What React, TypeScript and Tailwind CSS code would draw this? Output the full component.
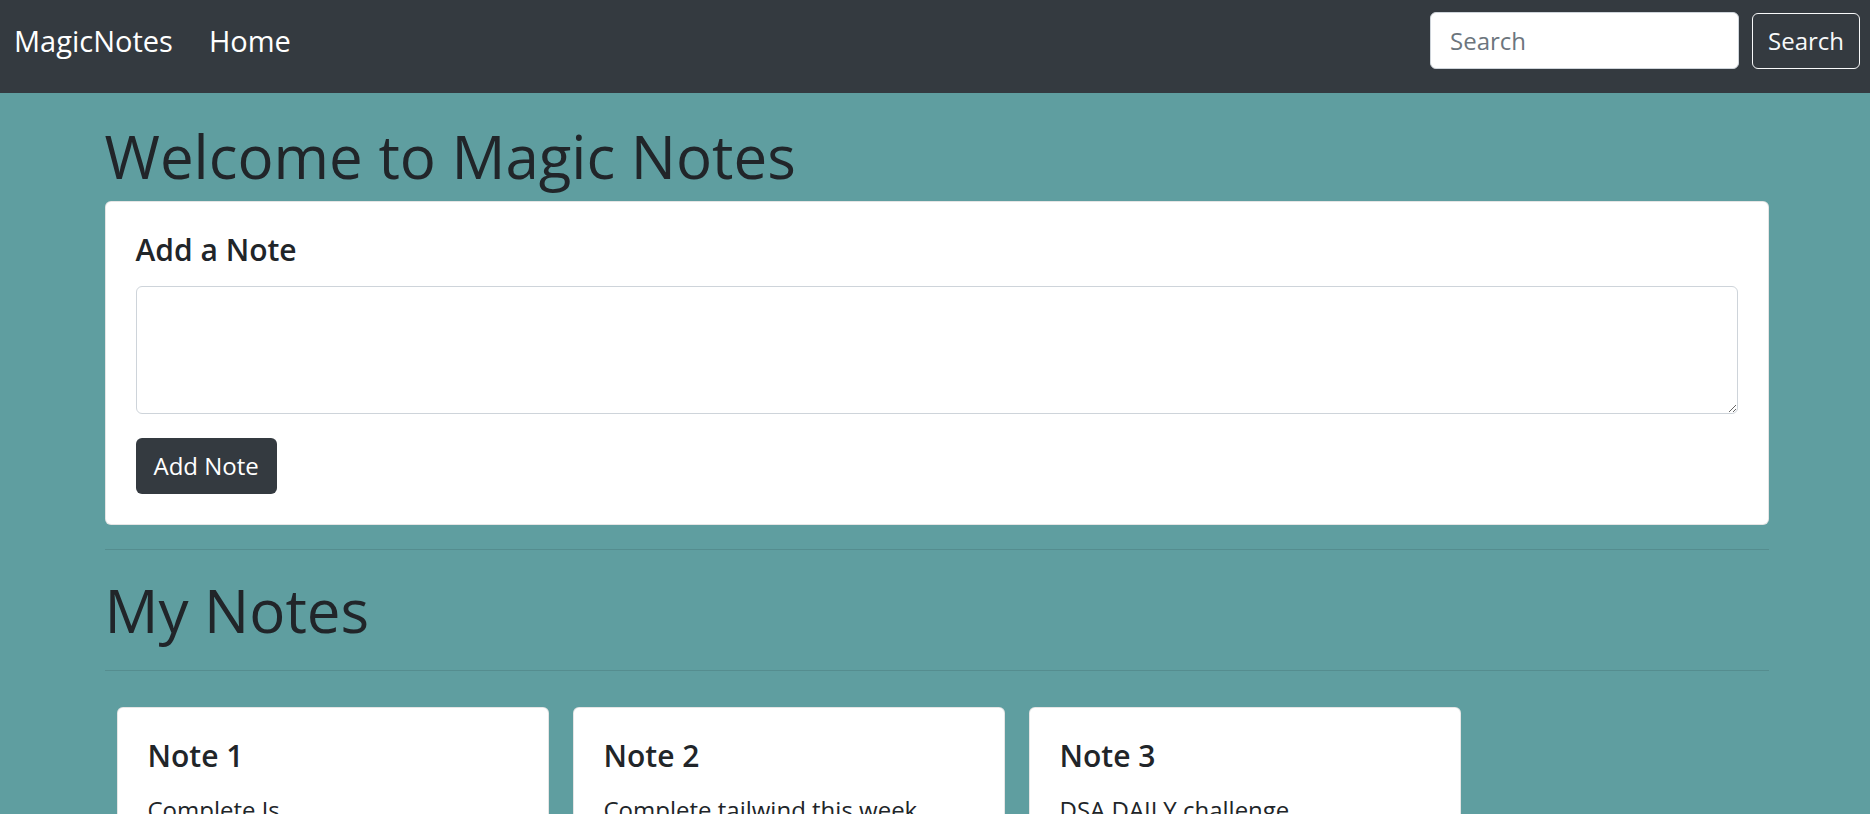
import { useState } from "react";

const notes = [
  { title: "Note 1", text: "Complete Js" },
  { title: "Note 2", text: "Complete tailwind this week" },
  { title: "Note 3", text: "DSA DAILY challenge" },
];

export default function App() {
  const [text, setText] = useState("");

  return (
    <div className="min-h-screen bg-[#5f9ea0] text-[#212529] font-['Open_Sans',sans-serif]">
      <nav className="bg-[#343a40] flex items-start justify-between pl-[14px] pr-[10px] pt-[12px] pb-[24px]">
        <div className="flex items-center h-[57px]">
          <a href="#" className="text-white text-[29px] mr-[24px]">
            MagicNotes
          </a>
          <a href="#" className="text-white text-[29px] px-[12px]">
            Home
          </a>
        </div>
        <form className="flex items-center gap-[13px]" onSubmit={(e) => e.preventDefault()}>
          <input
            type="search"
            placeholder="Search"
            className="w-[309px] h-[57px] bg-white rounded-[6px] border border-[#ced4da] px-[19px] text-[24px] text-[#495057] placeholder:text-[#6c757d] outline-none"
          />
          <button className="h-[56px] px-[15px] rounded-[6px] border-[1.5px] border-[#f8f9fa] text-[#f8f9fa] text-[24px]">
            Search
          </button>
        </form>
      </nav>

      <div className="w-[1667px] mx-auto pt-[24px] pl-[3px]">
        <h1 className="text-[60px] leading-[72px] font-medium mt-[3px] mb-[9px]">Welcome to Magic Notes</h1>
        <div className="bg-white rounded-[6px] border-[1.5px] border-black/10 p-[30px]">
          <h5 className="text-[30px] leading-[36px] font-semibold mb-[18px]">Add a Note</h5>
          <textarea
            value={text}
            onChange={(e) => setText(e.target.value)}
            className="block w-full h-[128px] rounded-[6px] border-[1.5px] border-[#ced4da] px-[18px] py-[9px] text-[24px] outline-none mb-[24px]"
          />
          <button className="h-[56px] px-[18px] rounded-[6px] bg-[#343a40] text-white text-[24px]">
            Add Note
          </button>
        </div>

        <div className="mt-[24px] border-t-[1.5px] border-black/10" />
        <h1 className="text-[60px] leading-[72px] font-medium my-[24px]">My Notes</h1>
        <div className="border-t-[1.5px] border-black/10 mb-[24px]" />

        <div className="flex flex-wrap">
          {notes.map((n) => (
            <div
              key={n.title}
              className="w-[432px] mx-[12px] my-[12px] bg-white rounded-[6px] border-[1.5px] border-black/10 p-[30px]"
            >
              <h5 className="text-[30px] leading-[36px] font-semibold mb-[18px]">{n.title}</h5>
              <p className="text-[24px] leading-[36px]">{n.text}</p>
            </div>
          ))}
        </div>
      </div>
    </div>
  );
}
